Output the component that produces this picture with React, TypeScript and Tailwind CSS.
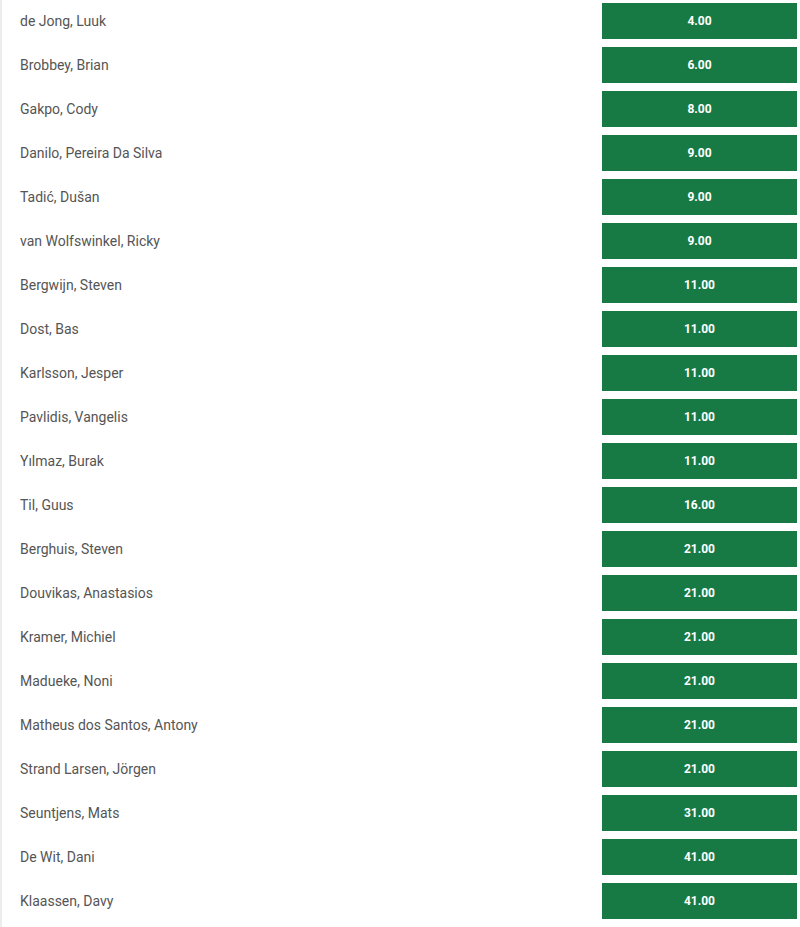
const PLAYERS: [string, string][] = [
  ["de Jong, Luuk", "4.00"],
  ["Brobbey, Brian", "6.00"],
  ["Gakpo, Cody", "8.00"],
  ["Danilo, Pereira Da Silva", "9.00"],
  ["Tadić, Dušan", "9.00"],
  ["van Wolfswinkel, Ricky", "9.00"],
  ["Bergwijn, Steven", "11.00"],
  ["Dost, Bas", "11.00"],
  ["Karlsson, Jesper", "11.00"],
  ["Pavlidis, Vangelis", "11.00"],
  ["Yılmaz, Burak", "11.00"],
  ["Til, Guus", "16.00"],
  ["Berghuis, Steven", "21.00"],
  ["Douvikas, Anastasios", "21.00"],
  ["Kramer, Michiel", "21.00"],
  ["Madueke, Noni", "21.00"],
  ["Matheus dos Santos, Antony", "21.00"],
  ["Strand Larsen, Jörgen", "21.00"],
  ["Seuntjens, Mats", "31.00"],
  ["De Wit, Dani", "41.00"],
  ["Klaassen, Davy", "41.00"],
];

export default function App() {
  return (
    <div className="w-[800px] h-[927px] bg-white border-l-2 border-[#ececec] pt-[3px] font-['Roboto','Liberation_Sans',sans-serif]">
      {PLAYERS.map(([name, odds]) => (
        <div key={name} className="flex items-center justify-between h-9 mb-2 pl-[18px] pr-[3px]">
          <span className="text-[14px] text-[#555]">{name}</span>
          <button className="w-[195px] h-9 bg-[#177a45] text-white text-[12px] font-bold">
            {odds}
          </button>
        </div>
      ))}
    </div>
  );
}
